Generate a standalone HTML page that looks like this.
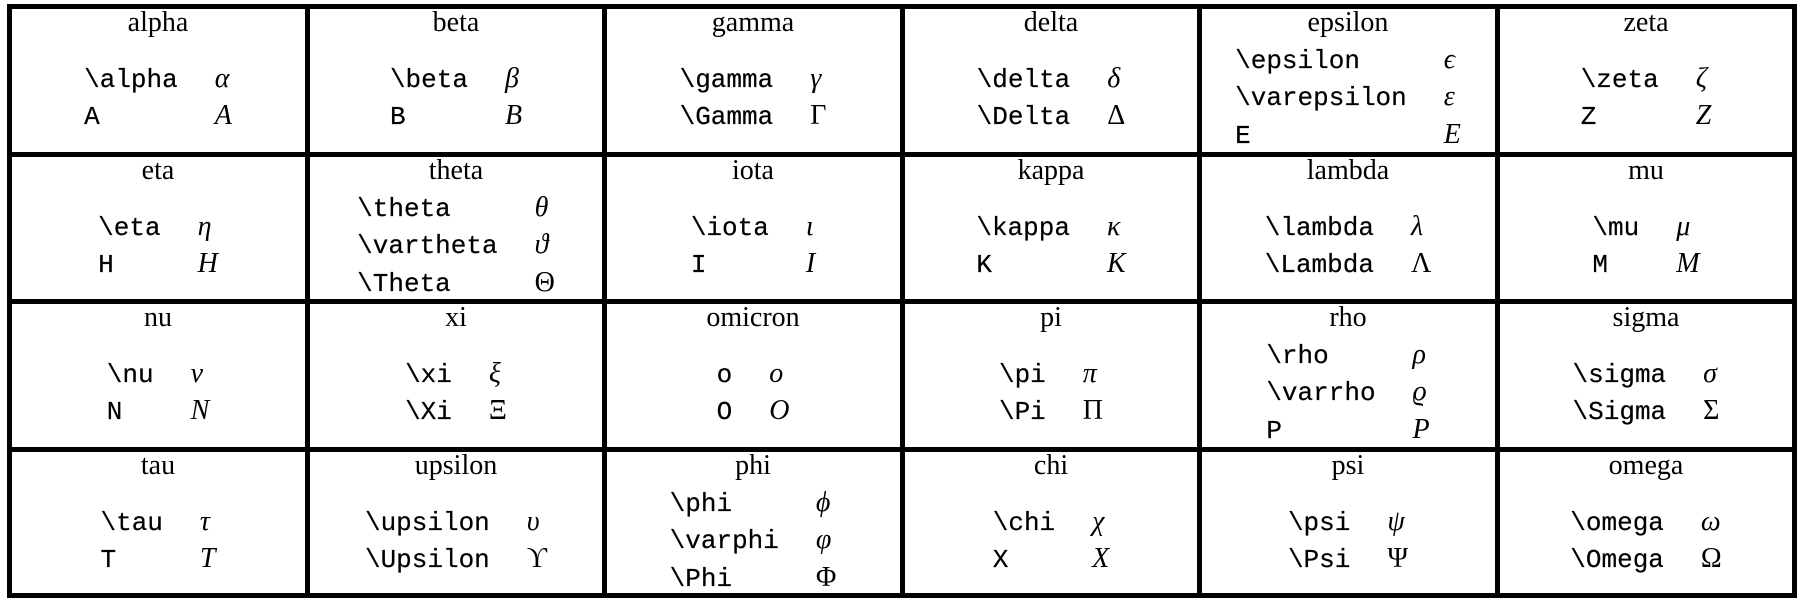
<!DOCTYPE html>
<html><head><meta charset="utf-8"><style>
html,body{margin:0;padding:0;background:#fff;width:1806px;height:606px;overflow:hidden;position:relative}
.h{position:absolute;left:7px;width:1790px;height:5px;background:#000}
.v{position:absolute;top:4px;height:594px;width:5px;background:#000}
.c{position:absolute;width:292px;height:142px}
.t{position:absolute;left:0;right:0;top:0;text-align:center;font:28px/28px "Liberation Serif","DejaVu Serif",serif;color:#000}
.b{position:absolute;left:0;right:0;top:36px;height:106px;display:flex;align-items:center;justify-content:center}
table{border-collapse:collapse}
td{padding:0;height:35.5px;line-height:35.5px;vertical-align:baseline;white-space:pre}
td.k{font:26px/35.5px "Liberation Mono","DejaVu Sans Mono",monospace;-webkit-text-stroke:0.2px #000}
td.s{font:28px/35.5px "Liberation Serif","DejaVu Serif",serif;padding-left:37px}
td.s.i{font-style:italic}
</style></head><body>
<div class="h" style="top:4px"></div>
<div class="h" style="top:152px"></div>
<div class="h" style="top:299px"></div>
<div class="h" style="top:447px"></div>
<div class="h" style="top:593px"></div>
<div class="v" style="left:7px"></div>
<div class="v" style="left:305px"></div>
<div class="v" style="left:602px"></div>
<div class="v" style="left:900px"></div>
<div class="v" style="left:1197px"></div>
<div class="v" style="left:1495px"></div>
<div class="v" style="left:1792px"></div>

<div class="c" style="left:12px;top:9px"><div class="t">alpha</div><div class="b"><table><tr><td class="k">\alpha</td><td class="s i">α</td></tr><tr><td class="k">A</td><td class="s i">A</td></tr></table></div></div>
<div class="c" style="left:310px;top:9px"><div class="t">beta</div><div class="b"><table><tr><td class="k">\beta</td><td class="s i">β</td></tr><tr><td class="k">B</td><td class="s i">B</td></tr></table></div></div>
<div class="c" style="left:607px;top:9px"><div class="t">gamma</div><div class="b"><table><tr><td class="k">\gamma</td><td class="s i">γ</td></tr><tr><td class="k">\Gamma</td><td class="s">Γ</td></tr></table></div></div>
<div class="c" style="left:905px;top:9px"><div class="t">delta</div><div class="b"><table><tr><td class="k">\delta</td><td class="s i">δ</td></tr><tr><td class="k">\Delta</td><td class="s">Δ</td></tr></table></div></div>
<div class="c" style="left:1202px;top:9px"><div class="t">epsilon</div><div class="b"><table><tr><td class="k">\epsilon</td><td class="s i">ϵ</td></tr><tr><td class="k">\varepsilon</td><td class="s i">ε</td></tr><tr><td class="k">E</td><td class="s i">E</td></tr></table></div></div>
<div class="c" style="left:1500px;top:9px"><div class="t">zeta</div><div class="b"><table><tr><td class="k">\zeta</td><td class="s i">ζ</td></tr><tr><td class="k">Z</td><td class="s i">Z</td></tr></table></div></div>

<div class="c" style="left:12px;top:157px"><div class="t">eta</div><div class="b"><table><tr><td class="k">\eta</td><td class="s i">η</td></tr><tr><td class="k">H</td><td class="s i">H</td></tr></table></div></div>
<div class="c" style="left:310px;top:157px"><div class="t">theta</div><div class="b"><table><tr><td class="k">\theta</td><td class="s i">θ</td></tr><tr><td class="k">\vartheta</td><td class="s i">ϑ</td></tr><tr><td class="k">\Theta</td><td class="s">Θ</td></tr></table></div></div>
<div class="c" style="left:607px;top:157px"><div class="t">iota</div><div class="b"><table><tr><td class="k">\iota</td><td class="s i">ι</td></tr><tr><td class="k">I</td><td class="s i">I</td></tr></table></div></div>
<div class="c" style="left:905px;top:157px"><div class="t">kappa</div><div class="b"><table><tr><td class="k">\kappa</td><td class="s i">κ</td></tr><tr><td class="k">K</td><td class="s i">K</td></tr></table></div></div>
<div class="c" style="left:1202px;top:157px"><div class="t">lambda</div><div class="b"><table><tr><td class="k">\lambda</td><td class="s i">λ</td></tr><tr><td class="k">\Lambda</td><td class="s">Λ</td></tr></table></div></div>
<div class="c" style="left:1500px;top:157px"><div class="t">mu</div><div class="b"><table><tr><td class="k">\mu</td><td class="s i">μ</td></tr><tr><td class="k">M</td><td class="s i">M</td></tr></table></div></div>

<div class="c" style="left:12px;top:304px"><div class="t">nu</div><div class="b"><table><tr><td class="k">\nu</td><td class="s i">ν</td></tr><tr><td class="k">N</td><td class="s i">N</td></tr></table></div></div>
<div class="c" style="left:310px;top:304px"><div class="t">xi</div><div class="b"><table><tr><td class="k">\xi</td><td class="s i">ξ</td></tr><tr><td class="k">\Xi</td><td class="s">Ξ</td></tr></table></div></div>
<div class="c" style="left:607px;top:304px"><div class="t">omicron</div><div class="b"><table><tr><td class="k">o</td><td class="s i">o</td></tr><tr><td class="k">O</td><td class="s i">O</td></tr></table></div></div>
<div class="c" style="left:905px;top:304px"><div class="t">pi</div><div class="b"><table><tr><td class="k">\pi</td><td class="s i">π</td></tr><tr><td class="k">\Pi</td><td class="s">Π</td></tr></table></div></div>
<div class="c" style="left:1202px;top:304px"><div class="t">rho</div><div class="b"><table><tr><td class="k">\rho</td><td class="s i">ρ</td></tr><tr><td class="k">\varrho</td><td class="s i">ϱ</td></tr><tr><td class="k">P</td><td class="s i">P</td></tr></table></div></div>
<div class="c" style="left:1500px;top:304px"><div class="t">sigma</div><div class="b"><table><tr><td class="k">\sigma</td><td class="s i">σ</td></tr><tr><td class="k">\Sigma</td><td class="s">Σ</td></tr></table></div></div>

<div class="c" style="left:12px;top:452px"><div class="t">tau</div><div class="b"><table><tr><td class="k">\tau</td><td class="s i">τ</td></tr><tr><td class="k">T</td><td class="s i">T</td></tr></table></div></div>
<div class="c" style="left:310px;top:452px"><div class="t">upsilon</div><div class="b"><table><tr><td class="k">\upsilon</td><td class="s i">υ</td></tr><tr><td class="k">\Upsilon</td><td class="s">ϒ</td></tr></table></div></div>
<div class="c" style="left:607px;top:452px"><div class="t">phi</div><div class="b"><table><tr><td class="k">\phi</td><td class="s i">ϕ</td></tr><tr><td class="k">\varphi</td><td class="s i">φ</td></tr><tr><td class="k">\Phi</td><td class="s">Φ</td></tr></table></div></div>
<div class="c" style="left:905px;top:452px"><div class="t">chi</div><div class="b"><table><tr><td class="k">\chi</td><td class="s i">χ</td></tr><tr><td class="k">X</td><td class="s i">X</td></tr></table></div></div>
<div class="c" style="left:1202px;top:452px"><div class="t">psi</div><div class="b"><table><tr><td class="k">\psi</td><td class="s i">ψ</td></tr><tr><td class="k">\Psi</td><td class="s">Ψ</td></tr></table></div></div>
<div class="c" style="left:1500px;top:452px"><div class="t">omega</div><div class="b"><table><tr><td class="k">\omega</td><td class="s i">ω</td></tr><tr><td class="k">\Omega</td><td class="s">Ω</td></tr></table></div></div>
</body></html>
